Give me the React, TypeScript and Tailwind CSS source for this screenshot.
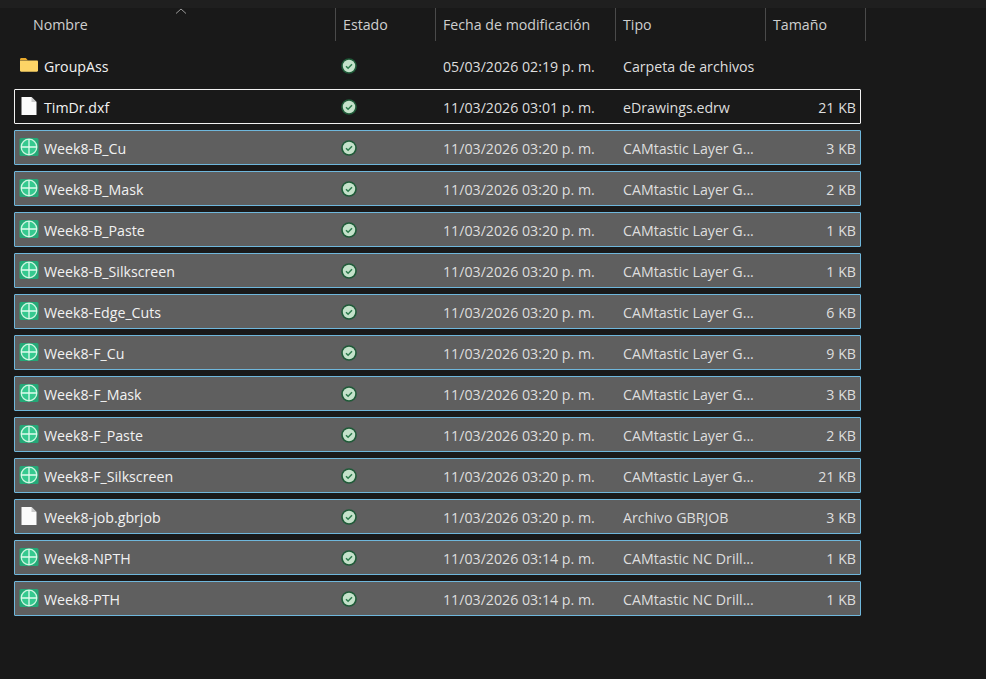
type R = { n: string; d: string; t: string; s: string; i: "folder" | "file" | "cam"; m?: "focus" | "sel" };
const G = "CAMtastic Layer G...";
const D = "CAMtastic NC Drill...";
const rows: R[] = [
  { n: "GroupAss", d: "05/03/2026 02:19 p. m.", t: "Carpeta de archivos", s: "", i: "folder" },
  { n: "TimDr.dxf", d: "11/03/2026 03:01 p. m.", t: "eDrawings.edrw", s: "21 KB", i: "file", m: "focus" },
  { n: "Week8-B_Cu", d: "11/03/2026 03:20 p. m.", t: G, s: "3 KB", i: "cam", m: "sel" },
  { n: "Week8-B_Mask", d: "11/03/2026 03:20 p. m.", t: G, s: "2 KB", i: "cam", m: "sel" },
  { n: "Week8-B_Paste", d: "11/03/2026 03:20 p. m.", t: G, s: "1 KB", i: "cam", m: "sel" },
  { n: "Week8-B_Silkscreen", d: "11/03/2026 03:20 p. m.", t: G, s: "1 KB", i: "cam", m: "sel" },
  { n: "Week8-Edge_Cuts", d: "11/03/2026 03:20 p. m.", t: G, s: "6 KB", i: "cam", m: "sel" },
  { n: "Week8-F_Cu", d: "11/03/2026 03:20 p. m.", t: G, s: "9 KB", i: "cam", m: "sel" },
  { n: "Week8-F_Mask", d: "11/03/2026 03:20 p. m.", t: G, s: "3 KB", i: "cam", m: "sel" },
  { n: "Week8-F_Paste", d: "11/03/2026 03:20 p. m.", t: G, s: "2 KB", i: "cam", m: "sel" },
  { n: "Week8-F_Silkscreen", d: "11/03/2026 03:20 p. m.", t: G, s: "21 KB", i: "cam", m: "sel" },
  { n: "Week8-job.gbrjob", d: "11/03/2026 03:20 p. m.", t: "Archivo GBRJOB", s: "3 KB", i: "file", m: "sel" },
  { n: "Week8-NPTH", d: "11/03/2026 03:14 p. m.", t: D, s: "1 KB", i: "cam", m: "sel" },
  { n: "Week8-PTH", d: "11/03/2026 03:14 p. m.", t: D, s: "1 KB", i: "cam", m: "sel" },
];

function Icon({ k }: { k: R["i"] }) {
  if (k === "folder")
    return (
      <svg width="20" height="18" viewBox="0 0 20 18" className="mt-[-3px]">
        <path d="M1 3.500C1 2.700 1.600 2 2.400 2h4.400l2 2.200H1z" fill="#e8a92c" />
        <path d="M1 4.600h17.200c.5 0 .8.400.8.800v9.200c0 .6-.5 1.100-1.100 1.100H2.100c-.6 0-1.100-.5-1.100-1.100z" fill="#fdd466" />
      </svg>
    );
  if (k === "file")
    return (
      <svg width="20" height="20" viewBox="0 0 20 20" className="mt-[-3px]">
        <path d="M2.500 1h10l5 5v13h-15z" fill="#fbfbfb" />
        <path d="M12.500 1l5 5h-5z" fill="#c9c9c9" />
      </svg>
    );
  return (
    <svg width="20" height="20" viewBox="0 0 20 20" className="mt-[-3px]">
      <rect x="0.500" y="1" width="19" height="18" rx="1.500" fill="#24a877" />
      <circle cx="10" cy="10" r="7.800" fill="#35c98f" stroke="#cdf5e0" strokeWidth="1.300" />
      <path d="M10 2v16M2 10h16" stroke="#e0fbee" strokeWidth="1.300" />
    </svg>
  );
}

function Status() {
  return (
    <svg width="18" height="18" viewBox="0 0 18 18" className="mt-[-2px]">
      <circle cx="9" cy="9" r="7.800" fill="#1f5a38" />
      <circle cx="9" cy="9" r="6.200" fill="#c4e2ca" />
      <path d="M6 9.200l2.100 2 3.900-3.900" fill="none" stroke="#2c7a4c" strokeWidth="1.500" />
    </svg>
  );
}

function Head({ w, label, first }: { w: string; label: string; first?: boolean }) {
  return (
    <div className={`${w} h-[33px] flex items-center border-r border-[#4a4a4a] ${first ? "pl-[33px] relative" : "pl-[7px]"} shrink-0`}>
      {first && (
        <svg width="12" height="6" viewBox="0 0 12 6" className="absolute left-[175px] top-0">
          <path d="M1 5.500L6 1l5 4.500" fill="none" stroke="#9a9a9a" />
        </svg>
      )}
      <span>{label}</span>
    </div>
  );
}

export default function App() {
  return (
    <div className="w-[986px] h-[679px] overflow-hidden bg-[#191919] text-[14.2px] text-[#dedede] font-['Open_Sans','Noto_Sans',sans-serif]">
      <div className="h-[8px] bg-[#1f1f1f]" />
      <div className="flex h-[40px] text-[#cfcfcf]">
        <Head first w="w-[336px]" label="Nombre" />
        <Head w="w-[100px]" label="Estado" />
        <Head w="w-[180px]" label="Fecha de modificación" />
        <Head w="w-[150px]" label="Tipo" />
        <Head w="w-[100px]" label="Tamaño" />
      </div>
      <div className="flex flex-col gap-[6px] ml-[14px] w-[847px]">
        {rows.map((r) => (
          <div
            key={r.n}
            className={`h-[35px] pt-[3px] flex items-center rounded-[1px] border ${
              r.m === "focus"
                ? "border-[#f2f2f2]"
                : r.m === "sel"
                  ? "border-[#6fb7dc] bg-[#5f5f5f]"
                  : "border-transparent"
            }`}
          >
            <div className="w-[320px] shrink-0 flex items-center gap-[5px] pl-[4px]">
              <Icon k={r.i} />
              <span className="text-[#f2f2f2]">{r.n}</span>
            </div>
            <div className="w-[108px] shrink-0 flex items-center pl-[5px]">
              <Status />
            </div>
            <div className="w-[180px] shrink-0 whitespace-nowrap">{r.d}</div>
            <div className="w-[150px] shrink-0 whitespace-nowrap">{r.t}</div>
            <div className="flex-1 text-right pr-[4px]">{r.s}</div>
          </div>
        ))}
      </div>
    </div>
  );
}
